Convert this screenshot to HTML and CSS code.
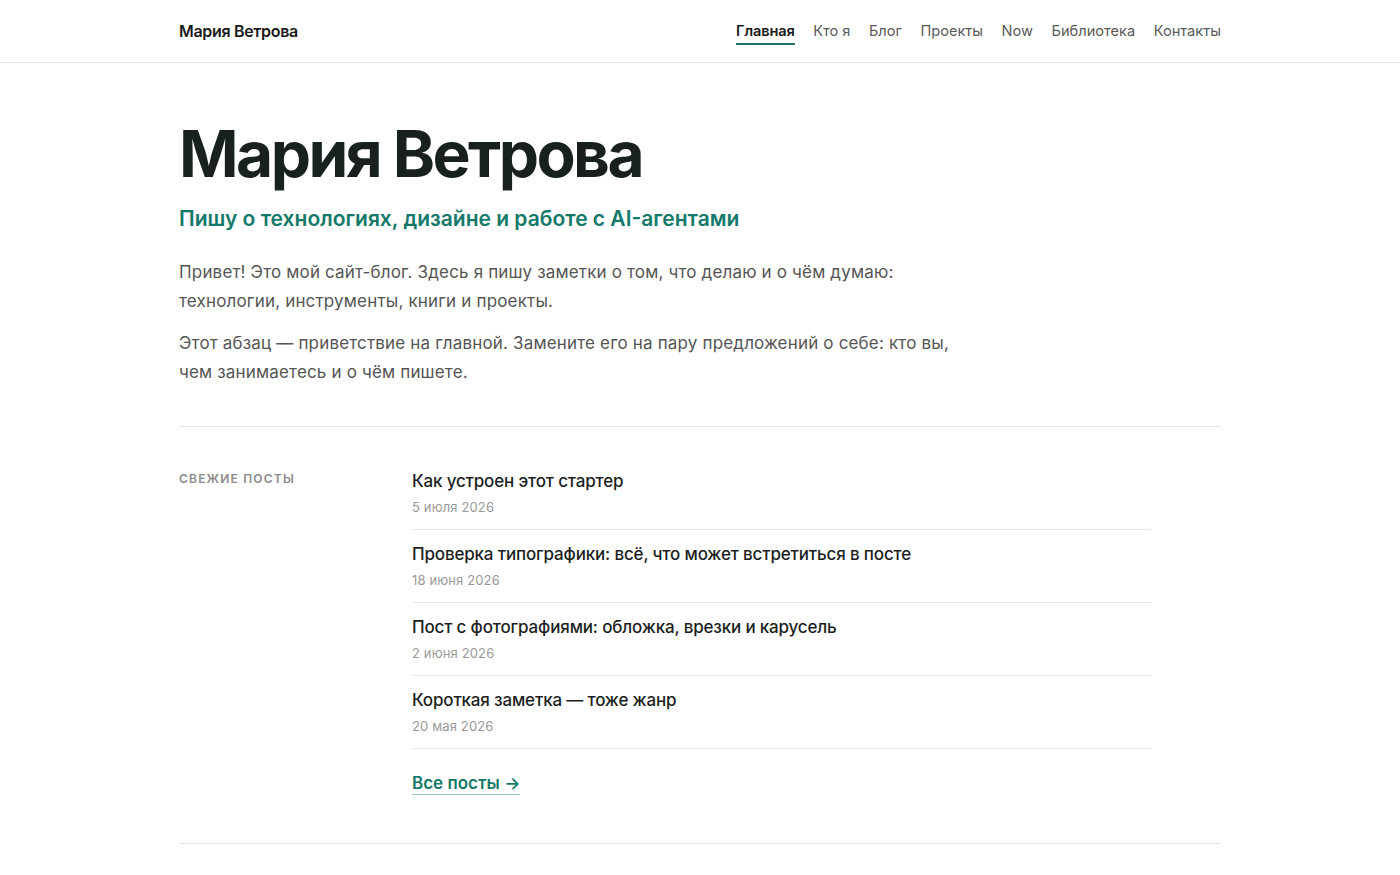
FILE: index.html
```html
<!DOCTYPE html>
<html lang="ru">
<head>
    <meta charset="UTF-8">
    <title>Мария Ветрова</title>
    <link rel="stylesheet" href="styles.css">
</head>
<body>
    <header class="site-header">
        <div class="wrap header-row">
            <a class="logo" href="#">Мария Ветрова</a>
            <nav class="nav">
                <a class="nav-link active" href="#">Главная</a>
                <a class="nav-link" href="#">Кто я</a>
                <a class="nav-link" href="#">Блог</a>
                <a class="nav-link" href="#">Проекты</a>
                <a class="nav-link" href="#">Now</a>
                <a class="nav-link" href="#">Библиотека</a>
                <a class="nav-link" href="#">Контакты</a>
            </nav>
        </div>
    </header>

    <main class="wrap">
        <section class="hero">
            <h1>Мария Ветрова</h1>
            <p class="tagline">Пишу о технологиях, дизайне и работе с AI-агентами</p>
            <p class="intro">Привет! Это мой сайт-блог. Здесь я пишу заметки о том, что делаю и о чём думаю: технологии, инструменты, книги и проекты.</p>
            <p class="intro">Этот абзац — приветствие на главной. Замените его на пару предложений о себе: кто вы, чем занимаетесь и о чём пишете.</p>
        </section>

        <section class="recent">
            <div class="recent-label">Свежие посты</div>
            <div class="recent-list">
                <a class="post" href="#">
                    <span class="post-title">Как устроен этот стартер</span>
                    <span class="post-date">5 июля 2026</span>
                </a>
                <a class="post" href="#">
                    <span class="post-title">Проверка типографики: всё, что может встретиться в посте</span>
                    <span class="post-date">18 июня 2026</span>
                </a>
                <a class="post" href="#">
                    <span class="post-title">Пост с фотографиями: обложка, врезки и карусель</span>
                    <span class="post-date">2 июня 2026</span>
                </a>
                <a class="post" href="#">
                    <span class="post-title">Короткая заметка — тоже жанр</span>
                    <span class="post-date">20 мая 2026</span>
                </a>
                <a class="all-posts" href="#">Все посты →</a>
            </div>
        </section>
    </main>
</body>
</html>
```

FILE: styles.css
```css
body,html{
    margin: 0;
    padding: 0;
    background-color: #fff;
}
body{
    font-family: Inter, "Noto Sans", sans-serif;
    color: #1c1f1e;
}
a{
    text-decoration: none;
    color: inherit;
}
.wrap{
    width: 1042px;
    margin: 0 auto;
}
.site-header{
    border-bottom: 1px solid #ebebeb;
}
.header-row{
    display: flex;
    align-items: center;
    justify-content: space-between;
    height: 62px;
}
.logo{
    font-size: 16px;
    font-weight: 600;
    color: #1a1a1a;
    letter-spacing: -0.02em;
}
.nav{
    display: flex;
    gap: 18.5px;
}
.nav-link{
    font-size: 14.6px;
    color: #5a5a5a;
    padding: 5px 0 3px;
    border-bottom: 2px solid transparent;
}
.nav-link.active{
    color: #1a1a1a;
    font-weight: 600;
    letter-spacing: -0.01em;
    border-bottom-color: #1f6f66;
}

.hero{
    padding: 56px 0 40px;
    border-bottom: 1px solid #e6e6e6;
}
.hero h1{
    margin: 0;
    font-size: 64px;
    line-height: 70px;
    font-weight: 700;
    letter-spacing: -0.04em;
    color: #18211f;
}
.tagline{
    margin: 16px 0 25px;
    font-size: 21px;
    line-height: 28px;
    font-weight: 600;
    color: #15796a;
}
.intro{
    margin: 0 0 14px;
    max-width: 790px;
    font-size: 17px;
    line-height: 28.5px;
    letter-spacing: 0.01em;
    color: #555;
}
.intro:last-child{
    margin-bottom: 0;
}

.recent{
    display: grid;
    grid-template-columns: 233px 739px;
    padding: 30px 0 48px;
    border-bottom: 1px solid #e6e6e6;
}
.recent-label{
    padding-top: 14px;
    font-size: 12px;
    line-height: 16px;
    font-weight: 600;
    letter-spacing: 0.1em;
    text-transform: uppercase;
    color: #8a8a8a;
}
.recent-list{
    display: flex;
    flex-direction: column;
}
.post{
    display: flex;
    flex-direction: column;
    padding: 11px 0 12px;
    border-bottom: 1px solid #e8e8e8;
}
.post-title{
    font-size: 17px;
    line-height: 26px;
    font-weight: 500;
    letter-spacing: -0.01em;
    color: #1c1f1e;
}
.post-date{
    margin-top: 3px;
    font-size: 13px;
    line-height: 20px;
    color: #999;
    letter-spacing: 0.01em;
}
.all-posts{
    align-self: flex-start;
    margin-top: 23px;
    font-size: 17px;
    line-height: 22px;
    font-weight: 600;
    color: #15796a;
    border-bottom: 1px solid #9cc8bf;
}
```
